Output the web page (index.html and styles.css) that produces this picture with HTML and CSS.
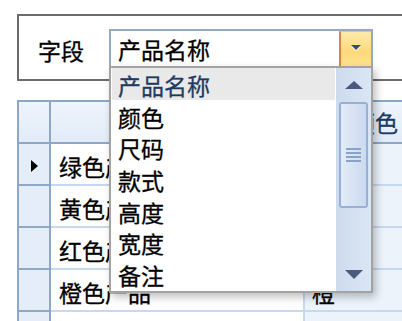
FILE: index.html
```html
<!DOCTYPE html>
<html lang="zh-CN">
<head>
    <meta charset="UTF-8">
    <meta name="viewport" content="width=device-width, initial-scale=1.0">
    <title>字段选择</title>
    <link rel="stylesheet" href="styles.css">
</head>
<body>
<div class="page">

    <!-- Field picker with its open drop-down list -->
    <div class="group">
        <span class="field-label">字段</span>
        <div class="combo">
            <span class="combo-text">产品名称</span>
            <span class="combo-button">
                <svg width="12" height="7" viewBox="0 0 12 7"><path d="M1 2h10L6 7z" fill="#fff"/><path d="M1 1h10L6 6z" fill="#3c4b6a"/></svg>
            </span>
            <div class="dropdown">
                <ul class="options">
                    <li class="option selected">产品名称</li>
                    <li class="option">颜色</li>
                    <li class="option">尺码</li>
                    <li class="option">款式</li>
                    <li class="option">高度</li>
                    <li class="option">宽度</li>
                    <li class="option">备注</li>
                </ul>
                <div class="vscroll">
                    <div class="scroll-btn">
                        <svg width="18" height="8" viewBox="0 0 18 8"><path d="M9 0L18 8H0z" fill="#4a5a7e"/></svg>
                    </div>
                    <div class="thumb"><span class="grip"></span></div>
                    <div class="scroll-track"></div>
                    <div class="scroll-btn">
                        <svg width="18" height="9" viewBox="0 0 18 9"><path d="M0 0h18L9 9z" fill="#4a5a7e"/></svg>
                    </div>
                </div>
            </div>
        </div>
    </div>

    <!-- Data grid behind the list -->
    <div class="grid">
        <div class="hd"></div>
        <div class="hd">产品名称</div>
        <div class="hd">颜色</div>

        <div class="rh">
            <svg width="7" height="12" viewBox="0 0 7 12"><path d="M0 0L7 6L0 12z" fill="#000"/></svg>
        </div>
        <div class="cell">绿色产品</div>
        <div class="cell alt">绿</div>

        <div class="rh"></div>
        <div class="cell">黄色产品</div>
        <div class="cell alt">黄</div>

        <div class="rh"></div>
        <div class="cell">红色产品</div>
        <div class="cell alt">红</div>

        <div class="rh"></div>
        <div class="cell">橙色产品</div>
        <div class="cell alt">橙</div>

        <div class="rh"></div>
        <div class="cell"></div>
        <div class="cell alt"></div>
    </div>

</div>
</body>
</html>
```

FILE: styles.css
```css
html, body {
    margin: 0;
    padding: 0;
}
body {
    font-family: "Noto Sans CJK SC", "Microsoft YaHei", sans-serif;
    background-color: #fff;
    color: #000;
    overflow: hidden;
    -webkit-text-stroke: 0.3px currentColor;
}
.page {
    width: 402px;
    height: 321px;
    padding-top: 14px;
    box-sizing: border-box;
    overflow: hidden;
}

/* group box */
.group {
    position: relative;
    z-index: 2;
    margin-left: 17px;
    height: 67px;
    box-sizing: border-box;
    border: 2px solid #6b6b6b;
    border-right: none;
    display: flex;
    align-items: flex-start;
    padding: 13px 0 0 19px;
}
.field-label {
    width: 46px;
    margin-right: 25px;
    font-size: 23px;
    line-height: 43px;
}

/* combo box */
.combo {
    position: relative;
    width: 264px;
    height: 37px;
    box-sizing: border-box;
    border: 2px solid #95a9c6;
    border-bottom: none;
    background-color: #fff;
    display: flex;
}
.combo-text {
    flex: 1;
    padding-left: 7px;
    font-size: 23px;
    line-height: 37px;
}
.combo-button {
    width: 32px;
    box-sizing: border-box;
    border-left: 2px solid #d38a3f;
    border-top: 1px solid #f0c46a;
    background: linear-gradient(#feeaa9, #fdd97a 60%, #fde390);
    display: flex;
    align-items: center;
    justify-content: center;
    padding-bottom: 3px;
}

/* open list */
.dropdown {
    position: absolute;
    top: 100%;
    left: -2px;
    width: 264px;
    height: 227px;
    box-sizing: border-box;
    border: 2px solid #a3a3a3;
    background-color: #fff;
    display: flex;
    box-shadow: 3px 4px 8px rgba(0, 0, 0, 0.25);
}
.options {
    list-style: none;
    margin: 0;
    padding: 0;
    flex: 1;
}
.option {
    height: 31.67px;
    line-height: 35px;
    margin: 0 1px;
    padding-left: 6px;
    font-size: 23px;
}
.option.selected {
    background-color: #e9e9e9;
    color: #1d3a63;
}
.vscroll {
    width: 35px;
    display: flex;
    flex-direction: column;
    background: linear-gradient(to right, #cddbee, #dbe6f4);
}
.scroll-btn {
    height: 33px;
    display: flex;
    align-items: center;
    justify-content: center;
}
.thumb {
    height: 106px;
    margin: 1px 3px 0;
    box-sizing: border-box;
    border: 2px solid #98b0d2;
    border-radius: 3px;
    background: linear-gradient(to right, #e3ebf7, #cbdaef);
    display: flex;
    align-items: center;
    justify-content: center;
}
.grip {
    width: 15px;
    height: 14px;
    background: repeating-linear-gradient(#8ba2c6 0 2px, transparent 2px 4px);
}
.scroll-track {
    flex: 1;
}

/* data grid */
.grid {
    margin: 19px 0 0 17px;
    display: grid;
    grid-template-columns: 32px 254px 142px;
    grid-auto-rows: 42px;
    border-left: 2px solid #8ea7c7;
    border-top: 2px solid #8ea7c7;
}
.hd, .rh, .cell {
    box-sizing: border-box;
    font-size: 23px;
    line-height: 40px;
    white-space: nowrap;
    overflow: hidden;
}
.hd {
    background: linear-gradient(#eef4fc, #e2ebf7);
    border-right: 2px solid #8ea7c7;
    border-bottom: 2px solid #8ea7c7;
    text-align: center;
    color: #1d3a63;
}
.hd:last-child {
    padding-left: 4px;
}
.rh {
    background-color: #e5edf8;
    border-right: 2px solid #8ea7c7;
    border-bottom: 2px solid #8ea7c7;
    display: flex;
    align-items: center;
    justify-content: center;
    padding-top: 3px;
}
.cell {
    background-color: #fff;
    border-right: 2px solid #c5d9f1;
    border-bottom: 2px solid #c5d9f1;
    padding-left: 8px;
    line-height: 45px;
}
.cell.alt {
    background-color: #edf3fb;
    padding-left: 7px;
}
```
